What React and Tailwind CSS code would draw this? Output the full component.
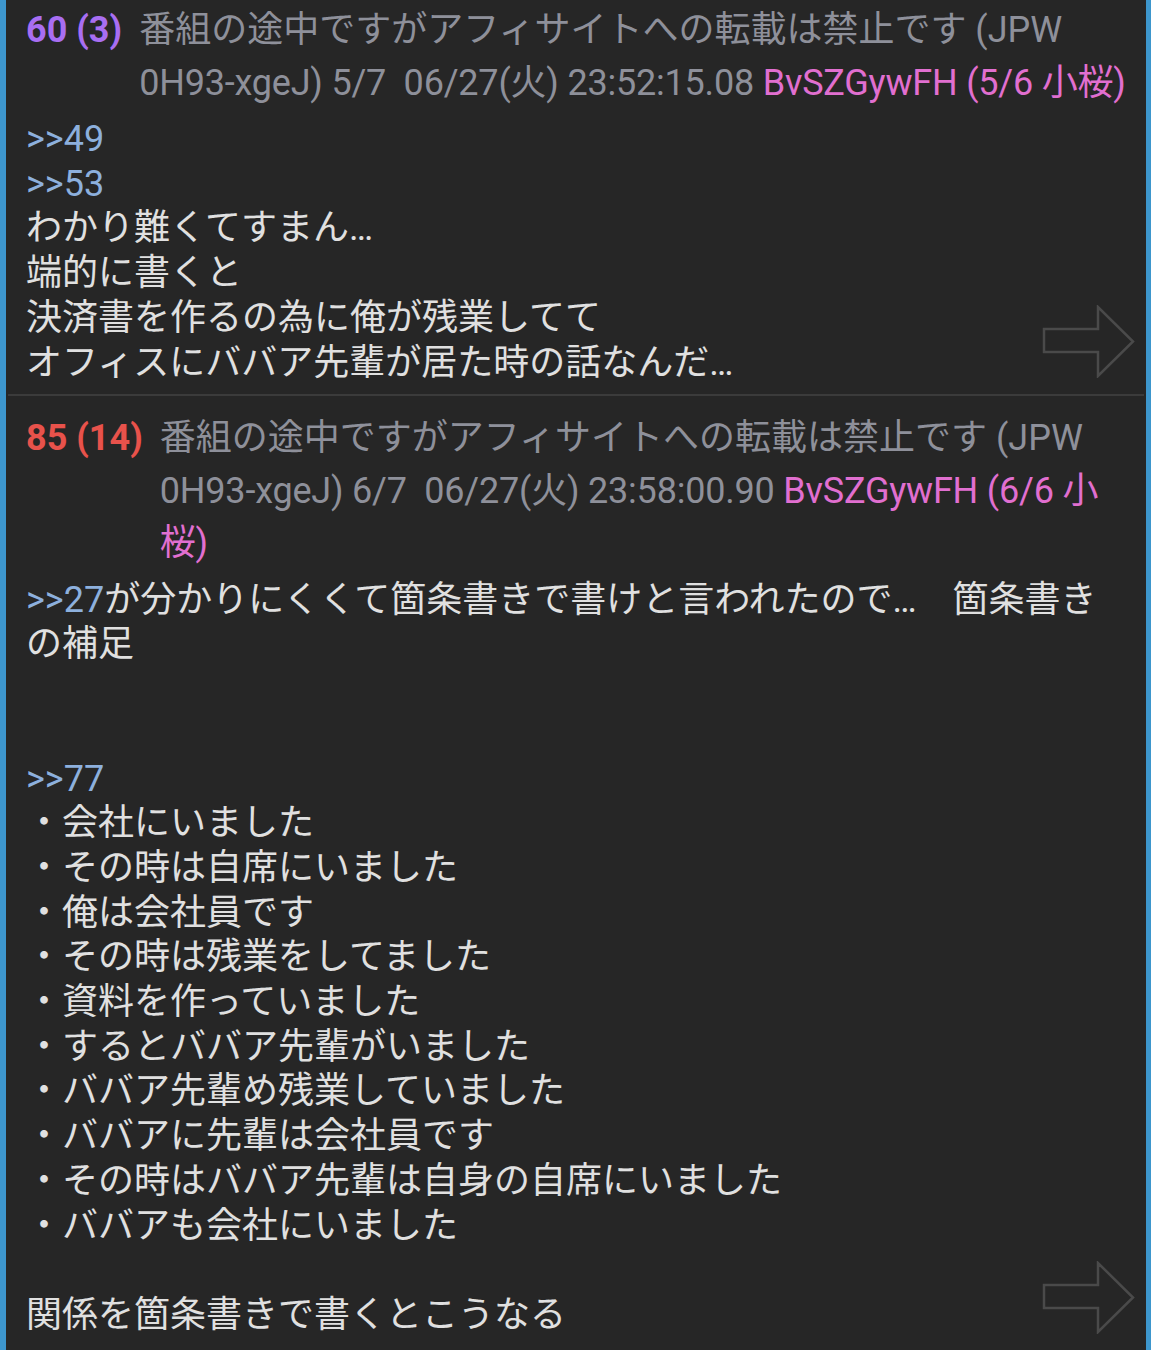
import React from "react";

// Right-arrow outline shown at the bottom right of each post
function NextArrow() {
  return (
    <svg
      className="absolute right-[11px] bottom-[16px] w-[93px] h-[73px]"
      viewBox="0 0 93 73"
      fill="none"
      stroke="#4a4a4a"
      strokeWidth="2.5"
      strokeLinejoin="miter"
    >
      <polygon points="2,24 56,24 56,2 91,36.5 56,71 56,47 2,47" />
    </svg>
  );
}

const Link = ({ children }) => <span className="text-[#8db0dd]">{children}</span>;

function Post({ num, numColor, header, children, className = "" }) {
  return (
    <div className={`relative pl-5 pr-2 ${className}`}>
      {/* Post header */}
      <div className="flex text-[36px] leading-[52.5px]">
        <span className={`shrink-0 font-bold ${numColor}`}>{num}</span>
        <div className="ml-[17px] text-[#8e909a] whitespace-nowrap">{header}</div>
      </div>
      {/* Post body */}
      <div className="mt-2 text-[36px] leading-[44.7px] text-[#e0e0e0] whitespace-pre-line">
        {children}
      </div>
      <NextArrow />
    </div>
  );
}

const Separator = () => <div className="mx-[2px] h-[2px] bg-[#3b3b3b]"></div>;

export default function App() {
  return (
    <div className="min-h-[1350px] bg-[#262626] border-l-[6px] border-r-[5px] border-[#3d96cd] font-['Roboto','Noto_Sans_CJK_JP',sans-serif] overflow-hidden">
      <Post
        className="pt-1 pb-[9px]"
        num="60 (3)"
        numColor="text-[#a86ef2]"
        header={
          <>
            番組の途中ですがアフィサイトへの転載は禁止です (JPW
            <br />
            <span className="tracking-[-0.2px]">
              0H93-xgeJ) 5/7{"\u00a0 "}06/27(火) 23:52:15.08{" "}
              <span className="text-[#e16fd0]">BvSZGywFH (5/6 小桜)</span>
            </span>
          </>
        }
      >
        <Link>&gt;&gt;49</Link>
        {"\n"}
        <Link>&gt;&gt;53</Link>
        {"\nわかり難くてすまん…\n端的に書くと\n決済書を作るの為に俺が残業してて\nオフィスにババア先輩が居た時の話なんだ…"}
      </Post>
      <Separator />
      <Post
        className="pt-4 pb-3"
        num="85 (14)"
        numColor="text-[#e8524b]"
        header={
          <>
            番組の途中ですがアフィサイトへの転載は禁止です (JPW
            <br />
            <span className="tracking-[-0.2px]">
              0H93-xgeJ) 6/7{"\u00a0 "}06/27(火) 23:58:00.90{" "}
              <span className="text-[#e16fd0]">
                BvSZGywFH (6/6 小
                <br />
                桜)
              </span>
            </span>
          </>
        }
      >
        <Link>&gt;&gt;27</Link>
        {"が分かりにくくて箇条書きで書けと言われたので…　箇条書き\nの補足\n\u00a0\n\u00a0\n"}
        <Link>&gt;&gt;77</Link>
        {"\n・会社にいました\n・その時は自席にいました\n・俺は会社員です\n・その時は残業をしてました\n・資料を作っていました\n・するとババア先輩がいました\n・ババア先輩め残業していました\n・ババアに先輩は会社員です\n・その時はババア先輩は自身の自席にいました\n・ババアも会社にいました\n\u00a0\n関係を箇条書きで書くとこうなる"}
      </Post>
      <Separator />
    </div>
  );
}
